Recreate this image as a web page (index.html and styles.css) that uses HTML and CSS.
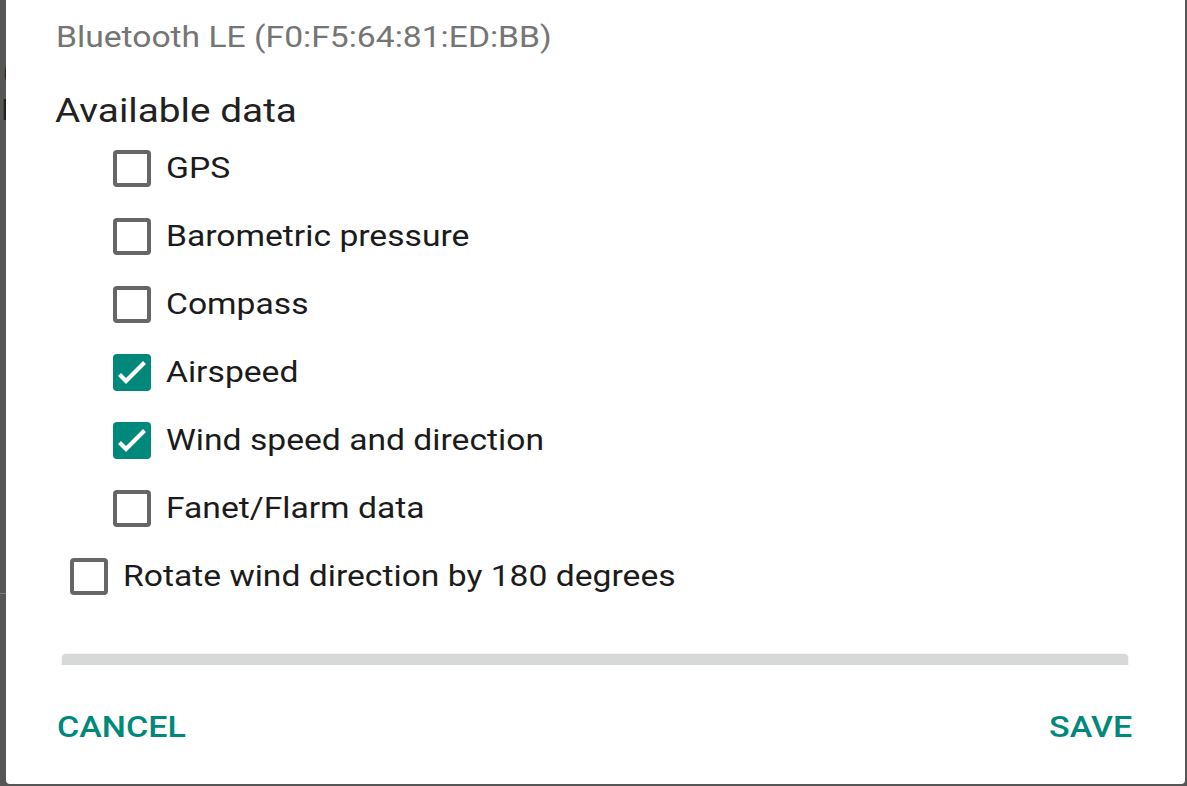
FILE: index.html
```html
<!DOCTYPE html>
<html>
<head>
<meta charset="utf-8">
<link rel="stylesheet" href="styles.css">
</head>
<body>
<div class="screen">
  <div class="edge edge-left">
    <div class="ghost g1">0</div>
    <div class="ghost g2">B</div>
    <div class="ghost-line"></div>
    <div class="ghost g3">e</div>
  </div>
  <div class="dialog">
    <div class="subtitle"><span class="wide">Bluetooth LE (F0:F5:64:81:ED:BB)</span></div>
    <div class="section"><span class="wide">Available data</span></div>
    <div class="options">
      <div class="row"><span class="box"></span><span class="label wide">GPS</span></div>
      <div class="row"><span class="box"></span><span class="label wide">Barometric pressure</span></div>
      <div class="row"><span class="box"></span><span class="label wide">Compass</span></div>
      <div class="row"><span class="box checked"><svg viewBox="0 0 38 36" width="38" height="36"><path d="M6.5 20.5 L13 27 L31.5 8.5" fill="none" stroke="#fff" stroke-width="4.2"/></svg></span><span class="label wide">Airspeed</span></div>
      <div class="row"><span class="box checked"><svg viewBox="0 0 38 36" width="38" height="36"><path d="M6.5 20.5 L13 27 L31.5 8.5" fill="none" stroke="#fff" stroke-width="4.2"/></svg></span><span class="label wide">Wind speed and direction</span></div>
      <div class="row"><span class="box"></span><span class="label wide">Fanet/Flarm data</span></div>
    </div>
    <div class="row rotate"><span class="box"></span><span class="label wide">Rotate wind direction by 180 degrees</span></div>
    <div class="scroll"><div class="card"></div></div>
    <div class="actions">
      <button class="btn btn-left">CANCEL</button>
      <button class="btn btn-right">SAVE</button>
    </div>
  </div>
  <div class="edge edge-right"></div>
</div>
</body>
</html>
```

FILE: styles.css
```css
* { box-sizing: border-box; }
html, body {
  margin: 0;
  padding: 0;
  width: 1187px;
  height: 786px;
  overflow: hidden;
  background: #565656;
  font-family: Roboto, "Liberation Sans", sans-serif;
}
.screen {
  display: flex;
  width: 1187px;
  height: 786px;
  align-items: flex-start;
}
.edge {
  height: 786px;
  background: #565656;
  flex: none;
  overflow: hidden;
}
.edge-left {
  width: 6px;
  display: flex;
  flex-direction: column;
  align-items: flex-end;
}
.edge-right {
  width: 2px;
}
.ghost {
  font-size: 30px;
  line-height: 36px;
  color: #222;
  margin-right: -14px;
}
.g1 { margin-top: 56px; }
.g2 { margin-top: 0; }
.ghost-line {
  width: 6px;
  height: 1px;
  background: #7a7a7a;
  margin-top: 465px;
  align-self: stretch;
}
.g3 {
  margin-top: 48px;
  color: #0b3d33;
  margin-right: -15px;
}
.dialog {
  width: 1179px;
  height: 784px;
  background: #fff;
  border-radius: 0 0 4px 4px;
  display: flex;
  flex-direction: column;
  flex: none;
}
.wide {
  display: inline-block;
  transform: scaleX(1.16);
  transform-origin: 0 50%;
}
.subtitle {
  margin-top: 17px;
  padding-left: 50px;
  font-size: 29px;
  line-height: 40px;
  color: #757575;
}
.section {
  margin-top: 29px;
  padding-left: 49px;
  font-size: 34px;
  line-height: 48px;
  color: #212121;
}
.section .wide { transform: scaleX(1.14); }
.options {
  display: flex;
  flex-direction: column;
  padding-left: 107px;
}
.row {
  display: flex;
  align-items: center;
  height: 68px;
  gap: 15px;
}
.rotate {
  padding-left: 64px;
}
.box {
  width: 38px;
  height: 37px;
  border: 4px solid #666;
  border-radius: 4px;
  flex: none;
  display: flex;
  align-items: center;
  justify-content: center;
}
.box.checked {
  border: none;
  background: #00897b;
}
.box svg { display: block; }
.label {
  font-size: 29px;
  color: #1b1b1b;
  line-height: 34px;
}
.scroll {
  height: 55px;
  padding: 44px 57px 0 56px;
  overflow: hidden;
  flex: none;
}
.card {
  height: 20px;
  background: #d7d9d8;
  border-radius: 4px 4px 0 0;
  box-shadow: 0 0 3px rgba(0,0,0,0.12);
}
.actions {
  display: flex;
  justify-content: space-between;
  padding: 44px 53px 0 51px;
}
.btn {
  border: none;
  background: none;
  padding: 0;
  font-family: Roboto, "Liberation Sans", sans-serif;
  font-weight: 500;
  font-size: 30px;
  line-height: 36px;
  color: #00897b;
  letter-spacing: 0;
  transform: scaleX(1.135);
}
.btn-left { transform-origin: 0 50%; }
.btn-right { transform-origin: 100% 50%; }
```
